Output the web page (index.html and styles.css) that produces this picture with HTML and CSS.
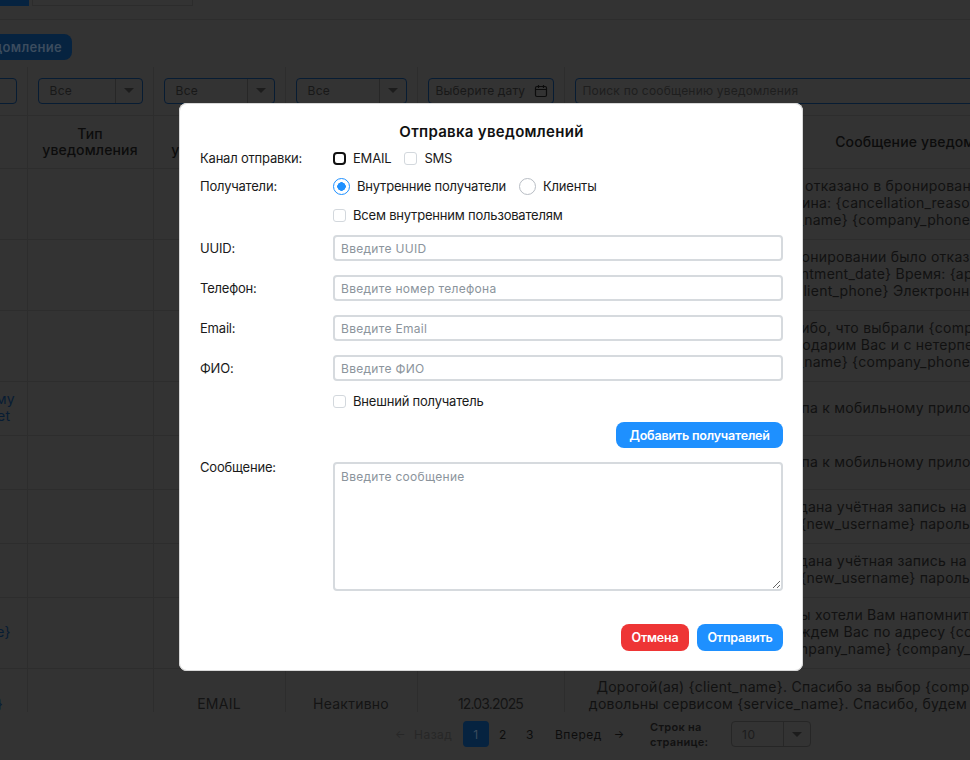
FILE: index.html
```html
<!DOCTYPE html>
<html lang="ru">
<head>
<meta charset="utf-8">
<title>Уведомления</title>
<link rel="stylesheet" href="styles.css">
</head>
<body>
<div class="page">
  <div class="tabs"><span class="tab-active"></span><span class="tab-plain"></span></div>
  <div class="toolbar"><button class="create-btn" type="button">Создать уведомление</button></div>
  <div class="table-clip">
    <table class="grid">
      <colgroup><col class="c0"><col class="c1"><col class="c2"><col class="c3"><col class="c4"><col class="c5"></colgroup>
      <thead>
        <tr class="filters">
          <th><span class="field field-end"></span></th>
          <th><span class="field select">Все<i class="caret-box"><i class="caret"></i></i></span></th>
          <th><span class="field select">Все<i class="caret-box"><i class="caret"></i></i></span></th>
          <th><span class="field select">Все<i class="caret-box"><i class="caret"></i></i></span></th>
          <th><span class="field date">Выберите дату
            <svg class="cal" viewBox="0 0 14 14" width="14" height="14"><rect x="1.500" y="2.500" width="11" height="10" rx="1.500" fill="none" stroke="#0c0c0c" stroke-width="1.200"/><path d="M1.500 5.500h11M4.500 1v3M9.500 1v3" fill="none" stroke="#0c0c0c" stroke-width="1.200"/></svg></span></th>
          <th><span class="field search">Поиск по сообщению уведомления</span></th>
        </tr>
        <tr class="heads">
          <th></th><th>Тип<br>уведомления</th><th>Статус<br>уведомления</th><th>Статус</th><th>Дата</th><th>Сообщение уведомления</th>
        </tr>
      </thead>
      <tbody>
        <tr class="r71"><td></td><td></td><td></td><td></td><td></td><td class="msg">Дорогой(ая) {client_name}. Вам отказано в бронировании услуги {service_name} {company_name}<br>Сообщаем, что причина: {cancellation_reason}. Приносим извинения за это.<br>{company_name} {company_phone} {company_email} {a}</td></tr>
        <tr class="r71"><td></td><td></td><td></td><td></td><td></td><td class="msg">Дорогой(ая). В бронировании было отказано, {service_name} {a} {abc}<br>Дата: {appointment_date} Время: {appointment_time} Клиент<br>Телефон: {client_phone} Электронная почта: {client_email}</td></tr>
        <tr class="r71"><td></td><td></td><td></td><td></td><td></td><td class="msg">Дорогой(ая). Спасибо, что выбрали {company_name} и нашу услугу там<br>Мы очень благодарим Вас и с нетерпением ждём Вашего визит<br>{company_name} {company_phone} {company_email} {a}</td></tr>
        <tr class="r54"><td class="link">За доступ к мобильному<br>приложению: m.site.net</td><td></td><td></td><td></td><td></td><td class="msg">Ссылка для доступа к мобильному приложению {company_name} сайт</td></tr>
        <tr class="r54"><td></td><td></td><td></td><td></td><td></td><td class="msg">Ссылка для доступа к мобильному приложению {company_name} сайт</td></tr>
        <tr class="r54"><td></td><td></td><td></td><td></td><td></td><td class="msg">Для Вас создана учётная запись на сайте компании {name}<br>Ваш логин: {new_username} пароль: {new_password} {xya}</td></tr>
        <tr class="r54"><td></td><td></td><td></td><td></td><td></td><td class="msg">Для Вас создана учётная запись на сайте компании {name}<br>Ваш логин: {new_username} пароль: {new_password} {xya}</td></tr>
        <tr class="r71"><td class="link">&nbsp;<br>{name_x} {client_phone}<br>&nbsp;</td><td></td><td></td><td></td><td></td><td class="msg">Дорогой(ая) {client_name}. Мы хотели Вам напомнить о записи на {appointment_date}. {xyzw}<br>{appointment_time}. Мы ждем Вас по адресу {company_address}. До новой встречи<br>С уважением, {company_name} {company_phone} {company_email} {site}</td></tr>
        <tr class="r73"><td class="link">{name}, {client_name}</td><td class="cell">&nbsp;</td><td class="cell">EMAIL</td><td class="cell">Неактивно</td><td class="cell cell-date">12.03.2025</td><td class="msg">Дорогой(ая) {client_name}. Спасибо за выбор {company_name}. Надеемся, вы остались там!<br>довольны сервисом {service_name}. Спасибо, будем рады видеть Вас снова и снова в салоне<br>С уважением, {company_name}</td></tr>
      </tbody>
    </table>
  </div>
  <nav class="pager">
    <span class="pg-prev"><span class="arrow">←</span>Назад</span>
    <span class="pg-num pg-current">1</span>
    <span class="pg-num">2</span>
    <span class="pg-num">3</span>
    <span class="pg-next">Вперед<span class="arrow">→</span></span>
    <span class="pg-label">Строк на странице:</span>
    <span class="pg-select">10<i class="caret-box"><i class="caret caret-grey"></i></i></span>
  </nav>
</div>

<div class="modal">
  <h2 class="modal-title">Отправка уведомлений</h2>
  <form class="form">
    <div class="row row-channel">
      <span class="label">Канал отправки:</span>
      <div class="opts">
        <label class="opt"><input class="check check-focus" type="checkbox">EMAIL</label>
        <label class="opt"><input class="check" type="checkbox">SMS</label>
      </div>
    </div>
    <div class="row row-recipients">
      <span class="label">Получатели:</span>
      <div class="opts opts-radio">
        <label class="opt"><input class="radio" type="radio" name="who" checked>Внутренние получатели</label>
        <label class="opt"><input class="radio" type="radio" name="who">Клиенты</label>
      </div>
    </div>
    <div class="row row-all">
      <span></span>
      <label class="opt"><input class="check" type="checkbox">Всем внутренним пользователям</label>
    </div>
    <div class="row row-input"><span class="label">UUID:</span><input class="text" placeholder="Введите UUID"></div>
    <div class="row row-input"><span class="label">Телефон:</span><input class="text" placeholder="Введите номер телефона"></div>
    <div class="row row-input"><span class="label">Email:</span><input class="text" placeholder="Введите Email"></div>
    <div class="row row-input"><span class="label">ФИО:</span><input class="text" placeholder="Введите ФИО"></div>
    <div class="row row-ext">
      <span></span>
      <label class="opt"><input class="check" type="checkbox">Внешний получатель</label>
    </div>
    <div class="add-wrap"><button class="btn btn-add" type="button">Добавить получателей</button></div>
    <div class="row row-msg"><span class="label label-msg">Сообщение:</span><textarea class="area" placeholder="Введите сообщение"></textarea></div>
    <div class="actions">
      <button class="btn btn-cancel" type="button">Отмена</button>
      <button class="btn btn-send" type="button">Отправить</button>
    </div>
  </form>
</div>
</body>
</html>
```

FILE: styles.css
```css
* { box-sizing: border-box; }
html, body { margin: 0; padding: 0; background: #333; }
body { font-family: "Inter", "DejaVu Sans", sans-serif; font-size: 13px; color: #111; overflow: hidden; }
.page { width: 970px; height: 760px; overflow: hidden; background: #333; }

.tabs { display: flex; gap: 3px; height: 20px; border-bottom: 1px solid #2d2d2d; }
.tab-active { width: 29px; height: 6px; background: #062340; }
.tab-plain { width: 161px; height: 6px; border: 1px solid #2c2c2c; border-top: 0; }

.toolbar { height: 47px; padding-top: 14px; }
.create-btn { display: block; width: 202px; height: 26px; margin-left: -130px; padding: 0 10px 0 0; border: 0; border-radius: 8px; background: #062340; color: #3b4c5e; font: 600 13px "Inter", sans-serif; letter-spacing: .3px; text-align: right; }

.table-clip { height: 645px; width: 1460px; margin-left: -173px; overflow: hidden; }
.grid { border-collapse: collapse; table-layout: fixed; width: 1460px; }
.c0 { width: 200px; } .c1 { width: 126px; } .c2 { width: 132px; } .c3 { width: 132px; } .c4 { width: 147px; } .c5 { width: 723px; }
.grid th, .grid td { border-right: 1px solid #2d2d2d; border-bottom: 1px solid #2d2d2d; padding: 0; text-align: center; overflow: hidden; white-space: nowrap; }
.grid th:last-child, .grid td:last-child { border-right: 0; }

.filters { height: 48px; }
.filters th { padding: 0 10px; font-weight: 400; text-align: left; }
.field { display: flex; align-items: center; height: 26px; padding-left: 11px; border: 1px solid #071c33; border-radius: 4px; color: #181818; font-size: 12px; letter-spacing: .3px; position: relative; }
.select { justify-content: flex-start; }
.caret-box { position: absolute; right: 0; top: 0; width: 27px; height: 24px; border-left: 1px solid #272727; display: flex; align-items: center; justify-content: center; }
.caret { width: 0; height: 0; border-left: 5px solid transparent; border-right: 5px solid transparent; border-top: 5px solid #1c1c1c; }
.caret-grey { border-top-color: #1c1c1c; }
.date { padding: 0 5px 0 7px; justify-content: space-between; white-space: nowrap; letter-spacing: .15px; }
.cal { flex: none; }
.search { padding-left: 7px; color: #1e1e1e; letter-spacing: .2px; }

.heads { height: 53px; }
.heads th { font-size: 14px; font-weight: 500; line-height: 16px; color: #0c0c0c; letter-spacing: .14px; }
.r71 { height: 71px; }
.r73 { height: 73px; }
.r54 { height: 54px; }
.grid td { font-size: 14px; line-height: 16.800px; color: #141414; letter-spacing: .25px; }
.grid td.link { color: #071c33; }
.grid td.msg { color: #111; }
.grid td.cell-date { letter-spacing: -.85px; }

.pager { display: flex; align-items: center; height: 44px; padding-left: 395px; font-size: 12px; font-weight: 400; color: #0d0d0d; letter-spacing: .5px; }
.arrow { font-size: 11px; }
.pg-prev { display: flex; gap: 8px; width: 68px; color: #272727; }
.pg-num { width: 26px; height: 26px; display: flex; align-items: center; justify-content: center; }
.pg-num + .pg-num { margin-left: 1px; }
.pg-current { border-radius: 4px; background: #062340; color: #3b4c5e; }
.pg-next { display: flex; gap: 12px; margin-left: 12px; width: 95px; }
.pg-label { width: 81px; margin-top: 1px; line-height: 15px; font-size: 11px; font-weight: 600; color: #111; letter-spacing: .3px; }
.pg-select { position: relative; display: flex; align-items: center; width: 80px; height: 26px; padding-left: 10px; border: 1px solid #262626; border-radius: 4px; color: #1c1c1c; font-weight: 400; }

.modal { position: absolute; left: 179px; top: 103px; width: 624px; height: 568px; padding: 0 20px 0 21px; background: #fff; border-radius: 8px; box-shadow: 0 0 0 1px #d8d8d8 inset; color: #1a1a1a; }
.modal-title { margin: 0; height: 47px; padding-top: 20px; font-size: 15px; line-height: 18px; font-weight: 600; text-align: center; letter-spacing: .3px; color: #111; }
.form { display: flex; flex-direction: column; }
.row { display: grid; grid-template-columns: 133px 1fr; align-items: center; }
.label { font-size: 13px; letter-spacing: -.2px; }
.opts { display: flex; gap: 13px; }
.opt { display: flex; align-items: center; gap: 7px; font-size: 13px; letter-spacing: -.2px; }
.check { appearance: none; width: 13px; height: 13px; margin: 0; border: 1.500px solid #d3d8dd; border-radius: 3px; background: #fff; flex: none; }
.check-focus { border: 2px solid #111; border-radius: 4px; }
.radio { appearance: none; width: 17px; height: 17px; margin: 0; border: 1px solid #b8bdc4; border-radius: 50%; background: #fff; flex: none; }
.radio:checked { border: 1.500px solid #1e90ff; background: radial-gradient(circle, #1e90ff 0 4px, #fff 4.500px); }
.row-channel { height: 16px; }
.row-recipients { height: 20px; margin-top: 10px; }
.row-all { height: 20px; margin-top: 9px; }
.row-input { height: 26px; margin-top: 14px; }
.row-all + .row-input { margin-top: 10px; }
.text, .area { width: 100%; margin: 0; border: 2px solid #d6dade; border-radius: 4px; background: #fff; font: 12px "Inter", sans-serif; letter-spacing: .3px; padding: 0 6px; color: #111; outline: 0; }
.text { height: 26px; }
.area { height: 129px; padding-top: 5px; display: block; }
.text::placeholder, .area::placeholder { color: #8b949c; opacity: 1; }
.row-ext { height: 20px; margin-top: 10px; }
.add-wrap { display: flex; justify-content: flex-end; margin-top: 11px; }
.btn { height: 27px; border: 0; border-radius: 8px; color: #fff; font: 600 12.500px "Inter", sans-serif; letter-spacing: -.2px; padding: 0; }
.btn-add { width: 167px; height: 26px; background: #1e90ff; }
.row-msg { margin-top: 14px; align-items: start; }
.label-msg { line-height: 10px; }
.actions { display: flex; justify-content: flex-end; gap: 8px; margin-top: 33px; }
.btn-cancel { width: 68px; background: #ee3535; }
.btn-send { width: 86px; background: #1e90ff; }
```
